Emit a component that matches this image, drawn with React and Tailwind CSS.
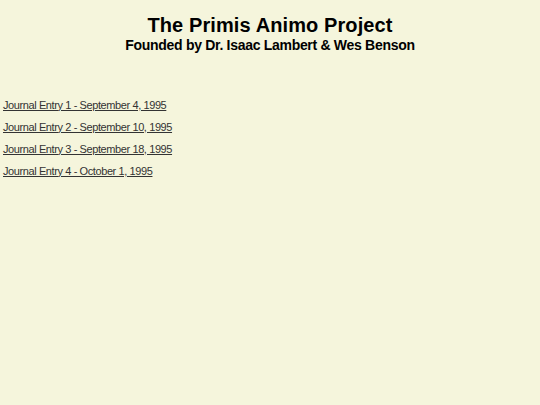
export default function App() {
  const entries = [
    'Journal Entry 1 - September 4, 1995',
    'Journal Entry 2 - September 10, 1995',
    'Journal Entry 3 - September 18, 1995',
    'Journal Entry 4 - October 1, 1995',
  ];

  return (
    <div className="min-h-screen bg-[#f5f5dc] font-['Liberation_Sans',Arial,sans-serif] text-black">
      <header className="pt-[13px] text-center">
        <h1 className="text-[20px] font-bold leading-[24px] tracking-[0.1px]">The Primis Animo Project</h1>
        <h2 className="text-[14px] font-bold leading-[17px] tracking-[-0.3px]">Founded by Dr. Isaac Lambert &amp; Wes Benson</h2>
      </header>
      <ul className="mt-[40px] px-[3px]">
        {entries.map((e, i) => (
          <li key={i} className="h-[22px] flex items-center">
            <a href="#" className="text-[11px] text-[#333] underline tracking-[-0.4px]">{e}</a>
          </li>
        ))}
      </ul>
    </div>
  );
}
